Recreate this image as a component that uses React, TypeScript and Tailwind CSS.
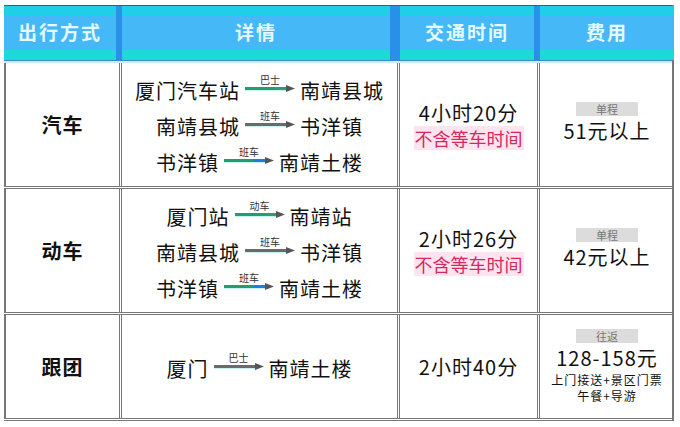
import React from "react";

type Leg = { from: string; to: string; label: string; kind: "bus" | "shuttle" | "rail" | "gray" };

const ROWS: {
  mode: string;
  legs: Leg[];
  time: string;
  note?: string;
  tag: string;
  price: string;
  extra?: string[];
}[] = [
  {
    mode: "汽车",
    legs: [
      { from: "厦门汽车站", to: "南靖县城", label: "巴士", kind: "bus" },
      { from: "南靖县城", to: "书洋镇", label: "班车", kind: "gray" },
      { from: "书洋镇", to: "南靖土楼", label: "班车", kind: "rail" },
    ],
    time: "4小时20分",
    note: "不含等车时间",
    tag: "单程",
    price: "51元以上",
  },
  {
    mode: "动车",
    legs: [
      { from: "厦门站", to: "南靖站", label: "动车", kind: "bus" },
      { from: "南靖县城", to: "书洋镇", label: "班车", kind: "gray" },
      { from: "书洋镇", to: "南靖土楼", label: "班车", kind: "rail" },
    ],
    time: "2小时26分",
    note: "不含等车时间",
    tag: "单程",
    price: "42元以上",
  },
  {
    mode: "跟团",
    legs: [{ from: "厦门", to: "南靖土楼", label: "巴士", kind: "gray" }],
    time: "2小时40分",
    tag: "往返",
    price: "128-158元",
    extra: ["上门接送+景区门票", "午餐+导游"],
  },
];

const Arrow = ({ label, kind }: { label: string; kind: Leg["kind"] }) => {
  const main = kind === "gray" ? "#6b6b6b" : "#1f9e6e";
  const tail = kind === "rail" ? "#1c7fe0" : kind === "gray" ? "#6b6b6b" : "#2a9d78";
  return (
    <div className="flex flex-col items-center w-[50px] mx-[5px] -mt-[14px]">
      <span className="text-[10px] leading-[11px] text-[#333] tracking-normal">{label}</span>
      <svg width="50" height="8" viewBox="0 0 50 8">
        <rect x="0" y="2" width="30" height="3" fill={main} />
        <rect x="30" y="2" width="14" height="3" fill={tail} />
        <rect x="0" y="5" width="44" height="1" fill="#c8f0f0" />
        <polygon points="41,0 50,3.5 41,7" fill="#555" />
      </svg>
    </div>
  );
};

export default function App() {
  return (
    <div
      className="w-[680px] h-[427px] bg-white pt-[5px] pl-[4px]"
      style={{ fontFamily: '"Noto Sans CJK SC", "Noto Sans", sans-serif' }}
    >
      <div className="w-[670px] border-r-[2px] border-[#777]">
        {/* header */}
        <div className="grid grid-cols-[118px_278px_140px_134px] h-[55px] border-t border-[#1b6f72]">
          {["出行方式", "详情", "交通时间", "费用"].map((h, i) => (
            <div
              key={h}
              className={`flex flex-col ${i === 0 ? "border-r-[6px]" : i === 1 ? "border-r-[10px]" : i === 2 ? "border-r-[6px]" : ""} border-[#2a8fe8]`}
            >
              <div className="h-[9px] bg-[#1ed0e6]" />
              <div className="flex-1 bg-[#45b8f8] flex items-center justify-center text-[19px] font-bold text-[#e3f8ff] tracking-[2px]">
                {h}
              </div>
              <div className="h-[10px] bg-[#1ed9d6]" />
            </div>
          ))}
        </div>
        <div className="h-[3px] border-t border-[#3d86c9] bg-[#cfe9fa]" />
        {ROWS.map((r, idx) => (
          <div
            key={r.mode}
            className={`grid grid-cols-[118px_278px_140px_134px] ${idx === 2 ? "h-[106px]" : "h-[126px]"} border-b-[3px] border-double border-[#777]`}
          >
            <div className="flex items-center justify-center border-l-[2px] border-r-[3px] border-double border-[#777] text-[20px] font-bold text-[#111] tracking-[1px]">
              {r.mode}
            </div>
            <div className="flex flex-col items-center justify-center gap-[14px] border-r-[3px] border-double border-[#777] pt-[4px]">
              {r.legs.map((l, i) => (
                <div key={i} className="flex items-center text-[20px] leading-[22px] text-[#111] tracking-[1px]">
                  <span>{l.from}</span>
                  <Arrow label={l.label} kind={l.kind} />
                  <span>{l.to}</span>
                </div>
              ))}
            </div>
            <div className="flex flex-col items-center justify-center border-r-[3px] border-double border-[#777] text-[#111]">
              <span className="text-[20px] leading-[26px] tracking-[1px]">{r.time}</span>
              {r.note && (
                <span className="text-[18px] leading-[24px] text-[#d4295f] bg-[#fde4ee] px-[1px]">{r.note}</span>
              )}
            </div>
            <div className={`flex flex-col items-center justify-center text-[#111] ${r.extra ? "pt-[0px]" : "pb-[4px]"}`}>
              <span className={`bg-[#dcdcdc] text-[#777] text-[11px] leading-[14px] w-[62px] text-center ${r.extra ? "mb-[1px]" : "mb-[3px]"}`}>{r.tag}</span>
              <span className={`text-[20px] tracking-[1px] ${r.extra ? "leading-[28px]" : "leading-[24px]"}`}>{r.price}</span>
              {r.extra?.map((e) => (
                <span key={e} className="text-[12px] leading-[16px] tracking-[1px]">{e}</span>
              ))}
            </div>
          </div>
        ))}
      </div>
    </div>
  );
}
